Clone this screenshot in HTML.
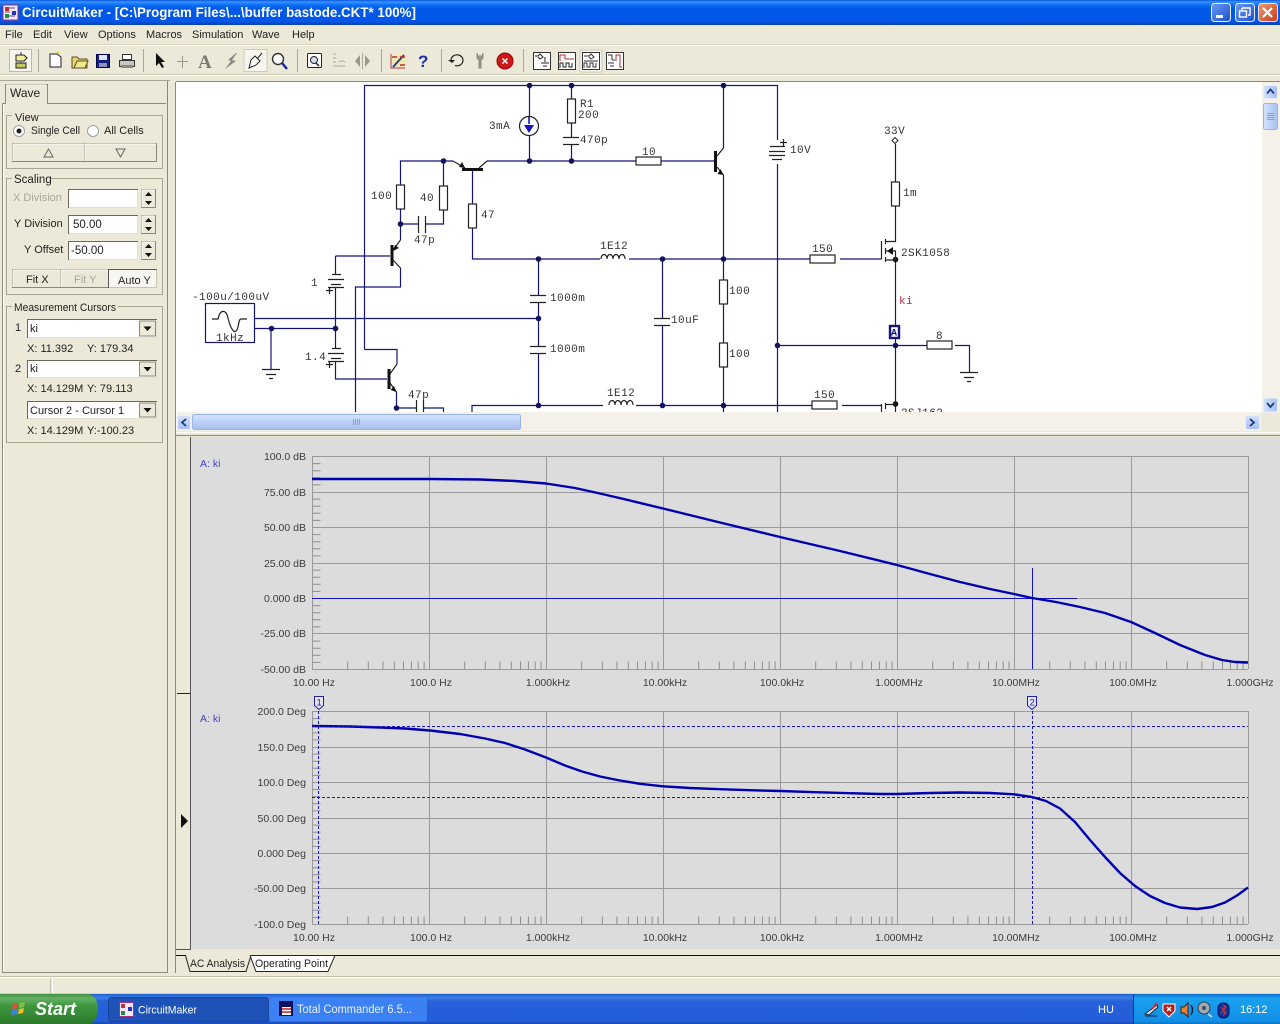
<!DOCTYPE html>
<html><head><meta charset="utf-8"><title>CircuitMaker</title>
<style>
html,body{margin:0;padding:0;background:#ece9d8;overflow:hidden}
svg{display:block;position:absolute;left:0;top:0}
text{font-family:"Liberation Sans",sans-serif;font-size:11px;fill:#222;white-space:pre}
.m text,text.m{font-family:"Liberation Mono",monospace;font-size:11px;letter-spacing:.45px;fill:#333}
.w{stroke:#14147a;stroke-width:1.2;fill:none}
.c{stroke:#222;stroke-width:1.2;fill:#fff}
.l{stroke:#222;stroke-width:1.2;fill:none}
.g{stroke:#9a9a9a;stroke-width:1;fill:none}
.t{stroke:#8e8e8e;stroke-width:1;fill:none}
.gl text,text.gl{font-size:10.5px;fill:#3c3c3c}
.cv{stroke:#0000b0;stroke-width:2.4;fill:none;stroke-linejoin:round}
.cu{stroke:#1515c0;stroke-width:1;fill:none}
.bx{fill:none;stroke:#a9a792}
.btn{fill:#ece9d8;stroke:#8a8876}
.ed{fill:#fff;stroke:#e4e1cf}
</style></head><body>
<svg width="1280" height="1024" viewBox="0 0 1280 1024" xmlns="http://www.w3.org/2000/svg">
<defs>
<linearGradient id="tb" x1="0" y1="0" x2="0" y2="1">
<stop offset="0" stop-color="#0a57dc"/><stop offset=".08" stop-color="#3a93ff"/><stop offset=".18" stop-color="#0f72f5"/><stop offset=".35" stop-color="#0058e6"/><stop offset=".85" stop-color="#0257e8"/><stop offset="1" stop-color="#0840b0"/>
</linearGradient>
<linearGradient id="tk" x1="0" y1="0" x2="0" y2="1">
<stop offset="0" stop-color="#1f5fd0"/><stop offset=".12" stop-color="#3a80e8"/><stop offset=".25" stop-color="#2560d8"/><stop offset=".9" stop-color="#245edb"/><stop offset="1" stop-color="#1a48a8"/>
</linearGradient>
<linearGradient id="st" x1="0" y1="0" x2="0" y2="1">
<stop offset="0" stop-color="#3c8f3c"/><stop offset=".15" stop-color="#64b064"/><stop offset=".4" stop-color="#3f963f"/><stop offset="1" stop-color="#2c7a2c"/>
</linearGradient>
<linearGradient id="tr" x1="0" y1="0" x2="0" y2="1">
<stop offset="0" stop-color="#0c6fd0"/><stop offset=".15" stop-color="#19a0ee"/><stop offset=".9" stop-color="#1290e6"/><stop offset="1" stop-color="#0f70c8"/>
</linearGradient>
<linearGradient id="sb" x1="0" y1="0" x2="0" y2="1">
<stop offset="0" stop-color="#d4e2fb"/><stop offset=".5" stop-color="#bcd0f7"/><stop offset="1" stop-color="#a8c0ee"/>
</linearGradient>
<linearGradient id="sv" x1="0" y1="0" x2="1" y2="0">
<stop offset="0" stop-color="#d4e2fb"/><stop offset=".5" stop-color="#bcd0f7"/><stop offset="1" stop-color="#a8c0ee"/>
</linearGradient>
<linearGradient id="wb" x1="0" y1="0" x2="1" y2="1">
<stop offset="0" stop-color="#6d9af0"/><stop offset="1" stop-color="#1d4fd0"/>
</linearGradient>
<linearGradient id="wr" x1="0" y1="0" x2="1" y2="1">
<stop offset="0" stop-color="#ee9b7a"/><stop offset="1" stop-color="#c63a14"/>
</linearGradient>
<clipPath id="sch"><rect x="177" y="83" width="1084" height="329"/></clipPath>
<path id="xt" d="M35.2 0v-8M55.8 0v-8M70.4 0v-8M81.8 0v-8M91 0v-8M98.9 0v-8M105.7 0v-8M111.6 0v-8" class="t"/>
<g id="xts"><use href="#xt" x="0"/><use href="#xt" x="117"/><use href="#xt" x="234"/><use href="#xt" x="351"/><use href="#xt" x="468"/><use href="#xt" x="585"/><use href="#xt" x="702"/><use href="#xt" x="819"/></g>
<path id="yt" d="M0 7.1h8M0 14.2h8M0 21.3h8M0 28.4h8" class="t"/>
<g id="yts"><use href="#yt" y="0"/><use href="#yt" y="35.5"/><use href="#yt" y="71"/><use href="#yt" y="106.5"/><use href="#yt" y="142"/><use href="#yt" y="177.5"/></g>
<g id="gnd"><path class="l" d="M-9 0h18M-5 5h10M-2 9h4"/></g>
<g id="hr"><rect class="c" x="-12.5" y="-4" width="25" height="8"/></g>
<g id="vr"><rect class="c" x="-4" y="-12" width="8" height="24"/></g>
</defs>

<!-- base -->
<rect width="1280" height="1024" fill="#ece9d8"/>
<!-- title bar -->
<rect width="1280" height="25" fill="url(#tb)"/>
<rect x="3" y="5" width="15" height="15" fill="#f4e8f4" stroke="#a03080"/>
<path d="M5 8h10M5 12h5M5 16h10" stroke="#604080" fill="none"/><rect x="12" y="11" width="4" height="4" fill="#2030c0"/><rect x="5" y="7" width="4" height="4" fill="#c03030"/><rect x="5" y="14" width="4" height="4" fill="#209040"/>
<text x="22" y="17" textLength="394" lengthAdjust="spacingAndGlyphs" style="font-size:14px;font-weight:bold;fill:#fff">CircuitMaker - [C:\Program Files\...\buffer bastode.CKT* 100%]</text>
<rect x="1211.5" y="3.5" width="19" height="18" rx="3" fill="url(#wb)" stroke="#e8f0ff"/><rect x="1216" y="15" width="7" height="3" fill="#fff"/>
<rect x="1235.5" y="3.5" width="19" height="18" rx="3" fill="url(#wb)" stroke="#e8f0ff"/><path d="M1242 8h8v7h-2M1242 8v2" stroke="#fff" fill="none" stroke-width="1.4"/><rect x="1239.5" y="11" width="7" height="6" fill="none" stroke="#fff" stroke-width="1.4"/>
<rect x="1258.5" y="3.5" width="19" height="18" rx="3" fill="url(#wr)" stroke="#f0e8e0"/><path d="M1263 8l9 9M1272 8l-9 9" stroke="#fff" stroke-width="2.2"/>

<!-- menu -->
<g style="fill:#222">
<text x="5" y="38">File</text><text x="33" y="38">Edit</text><text x="64" y="38">View</text><text x="98" y="38">Options</text><text x="146" y="38">Macros</text><text x="192" y="38">Simulation</text><text x="252" y="38">Wave</text><text x="292" y="38">Help</text>
</g>
<path d="M0 45.5H1280" stroke="#fff"/><path d="M0 44.5H1280" stroke="#d8d4c0"/>
<path d="M0 74.500H1280" stroke="#c8c5b0"/><path d="M0 75.500H1280" stroke="#fff"/>

<!-- toolbar -->
<path d="M38.500 49v23M143.500 49v23M297.500 49v23M381.500 49v23M441.500 49v23M523.500 49v23" stroke="#aaa795"/>
<rect x="9.500" y="49.500" width="22" height="22" fill="#f6f5ee" stroke="#bcb9a6"/>
<path d="M21 52v3M21 62v4" stroke="#222"/><path d="M16 55h8l3 3-3 3h-8z" fill="#f4f09a" stroke="#222"/><rect x="16" y="63" width="10" height="5" fill="#c4c860" stroke="#222"/>
<path d="M50 54h7l4 3v10H50z" fill="#fff" stroke="#222"/><path d="M57 52l2 1" stroke="#e8d020" stroke-width="2"/>
<path d="M72 57h5l2 2h8v9H72z" fill="#e8d470" stroke="#5a5020"/><path d="M74 68l3-7h11l-3 7z" fill="#f4e68c" stroke="#5a5020"/>
<rect x="96.500" y="54.500" width="13" height="13" fill="#10207c" stroke="#000050"/><rect x="99" y="55" width="8" height="5" fill="#e0e0ff"/><rect x="99" y="63" width="8" height="4" fill="#9090c0"/>
<path d="M122.500 54.500h9v5h-9z" fill="#fff" stroke="#333"/><rect x="119.500" y="60.500" width="15" height="6" fill="#c8c8c0" stroke="#333"/><rect x="121" y="65" width="12" height="3" fill="#888"/>
<path d="M156 53l0 13 3-3 3 5 2-1-3-5 4 0z" fill="#111"/>
<path d="M182.500 56v12M177 61.500h11" stroke="#9c9a8c"/>
<text x="198" y="68" style="font-family:'Liberation Serif',serif;font-size:19px;font-weight:bold;fill:#7a7a70">A</text>
<path d="M236 53l-8 7 3 1-6 8 11-8-4-1 5-7z" fill="#8a8a80"/>
<rect x="244" y="49.500" width="23" height="22" fill="#f6f5ee" stroke="#cfccb9"/>
<path d="M262 53l-5 6M251 60l4-4 5 5-4 4-7 3z" stroke="#222" fill="#fff"/>
<circle cx="278" cy="59" r="5.500" fill="#fff" stroke="#333" stroke-width="1.400"/><path d="M282 63l5 6" stroke="#1a2aa0" stroke-width="2.500"/>
<rect x="307.500" y="53.500" width="14" height="14" rx="1" fill="#fff" stroke="#222"/><circle cx="314" cy="60" r="3.500" fill="#cde" stroke="#222"/><path d="M316 63l3 3" stroke="#222" stroke-width="1.500"/>
<path d="M333 54h3M333 58h3M333 62h3M333 66h12M339 62a5 5 0 0 1 6 0" stroke="#aaa898" fill="none"/>
<path d="M360 55v12l-5-6zM365 55v12l5-6z" fill="#9a9888"/><path d="M362.500 53v16" stroke="#aaa898"/>
<circle cx="399" cy="61" r="7" fill="#f4e880" opacity=".45"/><path d="M391 54v14h14" stroke="#b04040" fill="none"/><path d="M393 67l11-12" stroke="#304080" stroke-width="2"/><path d="M392 57h5M400 65h5M400 57l5 0" stroke="#b03030" stroke-width="1.500"/>
<text x="418" y="67" style="font-size:17px;font-weight:bold;fill:#1830b0">?</text>
<path d="M451 60a6 5.500 0 1 1 4 5.500" stroke="#222" stroke-width="1.200" fill="none"/><path d="M448 60h7l-3 3z" fill="#222"/>
<path d="M477 53v5l2 2v8h2v-8l2-2v-5l-1 3h-4z" fill="#9c9a8c" stroke="#8a887a"/>
<circle cx="505" cy="61" r="8" fill="#cc1818" stroke="#900"/><path d="M502.500 58.500l5 5M507.500 58.500l-5 5" stroke="#fff" stroke-width="1.500"/>
<g fill="#fff" stroke="#333">
<rect x="533.500" y="52.500" width="17" height="17"/>
<rect x="558.500" y="52.500" width="17" height="17"/>
<rect x="580" y="50" width="22" height="22" fill="#f6f5ee" stroke="#cfccb9"/>
<rect x="582.500" y="52.500" width="17" height="17"/>
<rect x="606.500" y="52.500" width="17" height="17"/>
</g>
<path d="M535 56h3l2-2 3 3-3 2-2-2M545 57v5M541 63h8M543 66h4" stroke="#222" fill="none"/>
<path d="M560 61v-6h5v4h9" stroke="#b03030" fill="none"/><path d="M560 68v-5h3v4h3v-4h3v4h3v-4" stroke="#222" fill="none"/>
<path d="M584 56h5l2-2 3 3-3 2-2-2M584 68v-5h3v4h3v-4h3v4h3v-4M584 61h14" stroke="#333" fill="none"/>
<path d="M608 55h4v5M608 63h6M610 66h4M612 60h3" stroke="#333" fill="none"/><path d="M616 61v-6h4v12h2" stroke="#b03030" fill="none"/>

<!-- left panel -->
<path d="M0 80.500H170" stroke="#a8a694"/>
<path d="M2.500 103.500V972.500H167.500V81" fill="none" stroke="#8a8876"/><path d="M3.500 104V971.500" stroke="#fff"/>
<path d="M2.500 103.500H5.500V84.500H47.500V103.500H166" fill="none" stroke="#8a8876"/>
<path d="M6 85H46" stroke="#fff"/><rect x="6" y="86" width="41" height="18" fill="#ece9d8"/>
<text x="10" y="97" style="font-size:12px">Wave</text>
<rect class="bx" x="6.500" y="115.500" width="156" height="53"/>
<rect x="12" y="111" width="27" height="11" fill="#ece9d8"/><text x="15" y="121">View</text>
<circle cx="19" cy="131" r="5.500" fill="#fff" stroke="#98a0a8"/><circle cx="19" cy="131" r="2.500" fill="#222"/>
<text x="31" y="134" textLength="49" lengthAdjust="spacingAndGlyphs">Single Cell</text>
<circle cx="93" cy="131" r="5.500" fill="#fff" stroke="#98a0a8"/>
<text x="104" y="134">All Cells</text>
<rect class="btn" x="12.500" y="143.500" width="72" height="18"/><rect class="btn" x="84.500" y="143.500" width="72" height="18"/>
<path d="M13 161V144H84M85 161V144H156" stroke="#fff" fill="none"/>
<path d="M44 157l4.500-8 4.500 8z M116 149l4.500 8 4.500-8z" fill="none" stroke="#666"/>

<rect class="bx" x="6.500" y="178.500" width="156" height="116"/>
<rect x="12" y="174" width="38" height="11" fill="#ece9d8"/><text x="14" y="183" style="font-size:11.500px">Scaling</text>
<text x="13" y="201" style="fill:#a8a696">X Division</text><text x="14" y="227">Y Division</text><text x="24" y="253">Y Offset</text>
<rect class="ed" x="68.500" y="189.500" width="69" height="18"/><rect class="ed" x="68.500" y="215.500" width="69" height="18"/><rect class="ed" x="68.500" y="241.500" width="69" height="18"/>
<path d="M68.500 208V189.500H138M68.500 234V215.500H138M68.500 260V241.500H138" fill="none" stroke="#6a685a"/>
<text x="73" y="228" style="font-size:11.500px">50.00</text><text x="71" y="254" style="font-size:11.500px">-50.00</text>
<rect class="btn" x="141.500" y="189.500" width="14" height="18"/><rect class="btn" x="141.500" y="215.500" width="14" height="18"/><rect class="btn" x="141.500" y="241.500" width="14" height="18"/>
<path d="M142 207V190H155M142 233V216H155M142 259V242H155" stroke="#fff" fill="none"/>
<path d="M145 196l3.500-4 3.500 4zM145 201l3.500 4 3.500-4zM145 222l3.500-4 3.500 4zM145 227l3.500 4 3.500-4zM145 248l3.500-4 3.500 4zM145 253l3.500 4 3.500-4z" fill="#111"/>
<rect class="btn" x="12.500" y="269.500" width="48" height="18"/><rect class="btn" x="60.500" y="269.500" width="48" height="18"/><rect x="108.500" y="269.500" width="48" height="18" fill="#f7f6f0" stroke="#c8c5b2"/>
<path d="M13 287V270H60M61 287V270H108" stroke="#fff" fill="none"/>
<path d="M108.500 288V269.500H157" fill="none" stroke="#555"/>
<text x="26" y="283">Fit X</text><text x="74" y="283" style="fill:#a8a696">Fit Y</text><text x="118" y="284">Auto Y</text>

<rect class="bx" x="6.500" y="306.500" width="156" height="136"/>
<rect x="12" y="302" width="106" height="11" fill="#ece9d8"/><text x="14" y="311" textLength="102" lengthAdjust="spacingAndGlyphs">Measurement Cursors</text>
<text x="15" y="331">1</text><text x="15" y="372">2</text>
<g>
<rect class="ed" x="27.500" y="319.500" width="129" height="18"/><rect class="ed" x="27.500" y="360.500" width="129" height="17"/><rect class="ed" x="27.500" y="401.500" width="129" height="17"/>
<path d="M27.500 338V319.500H157M27.500 378V360.500H157M27.500 419V401.500H157" fill="none" stroke="#6a685a"/>
<rect class="btn" x="139.500" y="321" width="16" height="15"/><rect class="btn" x="139.500" y="362" width="16" height="14"/><rect class="btn" x="139.500" y="403" width="16" height="14"/>
<path d="M143.500 326.500h8l-4 4.500zM143.500 367h8l-4 4.500zM143.500 408h8l-4 4.500z" fill="#111"/>
</g>
<text x="30" y="332">ki</text><text x="30" y="372">ki</text><text x="30" y="414">Cursor 2 - Cursor 1</text>
<g style="fill:#333">
<text x="27" y="352">X: 11.392</text><text x="87" y="352">Y: 179.34</text>
<text x="27" y="392">X: 14.129M</text><text x="87" y="392">Y: 79.113</text>
<text x="27" y="434">X: 14.129M</text><text x="87" y="434">Y:-100.23</text>
</g>

<!-- schematic -->
<rect x="176" y="82" width="1102" height="348" fill="#fff"/>
<path d="M176 81.500H1280" stroke="#8a8876"/><path d="M175.500 82V973" stroke="#8a8876"/>
<g clip-path="url(#sch)">
<g class="w">
<path d="M364.500 349.500V85.500H777.500V140"/>
<path d="M364.500 349.500H397V364"/>
<path d="M400.500 185V161H453M443.500 161V186M400.500 209V240M400.500 224H418M425 224H443.500V210"/>
<path d="M487 161H636M661 161H715M529.500 85V116M529.500 136V161M571.500 85V99M571.500 123V137M571.500 144V161"/>
<path d="M723.500 85V148M723.500 175V280M723.500 304V343M723.500 367V412"/>
<path d="M472.500 170V204M472.500 228V259H600M629 259H810M840 259H881"/>
<path d="M400.500 268V287H355.500V412"/>
<path d="M335.500 256H390M335.500 256V274M335.500 287V348M335.500 361V379H387"/>
<path d="M255 318.500H538M255 328.500H335M271 328V369"/>
<path d="M538.500 259V295M538.500 302V346M538.500 353V405"/>
<path d="M662.500 259V318M662.500 325V405"/>
<path d="M472 412V405.500H603M636 405.500H812M842 405.500H881"/>
<path d="M777.500 164V412M777 345.500H927M955 345.500H969.500V372"/>
<path d="M895.500 144V182M895.500 206V233M895.500 259V412"/>
<path d="M396.500 392V408M396 408H416M423 408H443.500V412"/>
</g>
<!-- nodes -->
<g fill="#14145e">
<circle cx="529.500" cy="85.500" r="2.800"/><circle cx="571.500" cy="85.500" r="2.800"/><circle cx="723.500" cy="85.500" r="2.800"/>
<circle cx="529.500" cy="161" r="2.800"/><circle cx="571.500" cy="161" r="2.800"/><circle cx="443.500" cy="161" r="2.800"/>
<circle cx="400.500" cy="224" r="2.800"/><circle cx="538.500" cy="259" r="2.800"/><circle cx="662.500" cy="259" r="2.800"/><circle cx="723.500" cy="259" r="2.800"/>
<circle cx="538.500" cy="318.500" r="2.800"/><circle cx="335.500" cy="328.500" r="2.800"/><circle cx="271.500" cy="328.500" r="2.800"/>
<circle cx="777.500" cy="345.500" r="2.800"/><circle cx="895.500" cy="345.500" r="2.800"/>
<circle cx="538.500" cy="405.500" r="2.800"/><circle cx="662.500" cy="405.500" r="2.800"/><circle cx="723.500" cy="405.500" r="2.800"/>
<circle cx="396.500" cy="408" r="2.800"/>
</g>
<g fill="#111"><circle cx="895.500" cy="259.500" r="2.800"/><circle cx="895.500" cy="404" r="2.800"/></g>
<!-- resistors -->
<use href="#vr" x="400.500" y="197"/><use href="#vr" x="443.500" y="198"/><use href="#vr" x="472.500" y="216"/>
<use href="#vr" x="571.500" y="111"/><use href="#vr" x="723.500" y="292"/><use href="#vr" x="723.500" y="355"/><use href="#vr" x="895.500" y="194"/>
<use href="#hr" x="648.500" y="161"/><use href="#hr" x="822.500" y="259"/><use href="#hr" x="824.500" y="405"/><use href="#hr" x="939.500" y="345"/>
<!-- caps -->
<path class="l" d="M418.500 216V233M425.500 216V233M563 137.500H579M563 144.500H579M530 295.500H546M530 302.500H546M530 346.500H546M530 353.500H546M654 318.500H670M654 325.500H670M416.500 400V412M423.500 400V412"/>
<!-- inductors -->
<path class="l" d="M601 259c0-6 6-6 6 0c0-6 6-6 6 0c0-6 6-6 6 0c0-6 6-6 6 0"/>
<path class="l" d="M609 405c0-6 6-6 6 0c0-6 6-6 6 0c0-6 6-6 6 0c0-6 6-6 6 0"/>
<!-- batteries -->
<path class="l" d="M332 274.500H341M328 279.500H344M331 284.500H341M328 287.500H344M332 348.500H341M328 353.500H344M331 358.500H341M328 361.500H344M770 146.500H785M769 151.500H785M769 155.500H785M772 159.500H782M326 290.500h7M329.500 287v7M326 364.500h7M329.500 361v7M780 142.500h7M783.500 139v7"/>
<!-- transistors -->
<path d="M392 245V266" stroke="#111" stroke-width="3" fill="none"/>
<path class="l" d="M400.500 240L393 250M393 260L400.500 268"/><path d="M393 251l2-6 4 3z" fill="#111"/>
<path d="M389 369V389" stroke="#111" stroke-width="3" fill="none"/>
<path class="l" d="M397 364L390 374M390 383L396.500 392"/><path d="M396.500 392l-6-2 3.500-4z" fill="#111"/>
<path d="M462 169.500H483" stroke="#111" stroke-width="3" fill="none"/>
<path class="l" d="M453 161L465 168M479 168L487 161"/><path d="M465 168l-6-1 3-5z" fill="#111"/>
<path d="M715.500 151V172" stroke="#111" stroke-width="3" fill="none"/>
<path class="l" d="M717 156L723.500 148M717 167L723.500 175"/><path d="M723.500 175l-6-1 3-5z" fill="#111"/>
<!-- mosfets -->
<path class="l" d="M881.500 241V259.500M885.500 239V244M885.500 248V254M885.500 257V262M885.500 241.500H895.500V233M885.500 251H895.500V259.500M885.500 260H895.500"/>
<path d="M887 251l6-4v8z" fill="#111"/>
<path class="l" d="M881.500 404V412M885.500 403V409M885.500 404.500H895.500"/>
<!-- current source -->
<circle cx="529" cy="126" r="9.500" fill="#fff" stroke="#222" stroke-width="1.200"/>
<path d="M529 117v7" stroke="#1414c8" stroke-width="1.600"/><path d="M524 125h10l-5 8z" fill="#1414c8"/>
<!-- source -->
<rect x="205.500" y="303.500" width="49" height="39" fill="#fff" stroke="#14147a" stroke-width="1.200"/>
<path class="l" d="M212 319h6c2-10 8-10 10 -1s7 20 10 9c1-4 1-8 3-8h6"/>
<!-- ground -->
<use href="#gnd" x="271" y="369.500"/><use href="#gnd" x="969" y="372.500"/>
<!-- diamond -->
<path d="M895 137.500l3 3-3 3-3-3z" fill="#fff" stroke="#222"/>
<!-- probe -->
<rect x="890" y="326" width="9" height="12" fill="#fff" stroke="#14147a" stroke-width="2.400"/>
<text x="891" y="335.500" style="font-family:'Liberation Mono',monospace;font-size:10px;fill:#14147a;font-weight:bold">A</text>
<g class="m">
<text x="192" y="300">-100u/100uV</text><text x="216" y="341">1kHz</text>
<text x="311" y="286">1</text><text x="305" y="360">1.4</text>
<text x="371" y="199">100</text><text x="420" y="201">40</text><text x="414" y="243">47p</text>
<text x="481" y="218">47</text><text x="408" y="398">47p</text><text x="489" y="129">3mA</text>
<text x="580" y="107">R1</text><text x="578" y="118">200</text><text x="580" y="143">470p</text>
<text x="642" y="155">10</text><text x="790" y="153">10V</text><text x="884" y="134">33V</text>
<text x="903" y="196">1m</text><text x="901" y="256">2SK1058</text>
<text x="600" y="249">1E12</text><text x="607" y="396">1E12</text>
<text x="550" y="301">1000m</text><text x="550" y="352">1000m</text><text x="671" y="323">10uF</text>
<text x="729" y="294">100</text><text x="729" y="357">100</text>
<text x="812" y="252">150</text><text x="814" y="398">150</text><text x="936" y="339">8</text>
<text x="901" y="416">2SJ162</text>
<text x="899" y="304" style="fill:#a83048">ki</text>
</g>
</g>
<!-- scrollbars -->
<rect x="177" y="412" width="1103" height="19" fill="#f3f1e8"/>
<rect x="1262" y="82" width="18" height="349" fill="#f3f1e8"/>
<rect x="1261" y="413" width="19" height="18" fill="#ece9d8"/>
<rect x="177.500" y="415.500" width="13" height="14" rx="2" fill="url(#sb)" stroke="#e8eefb"/><path d="M186 419l-4 3.500 4 3.500" stroke="#1a3a80" stroke-width="1.800" fill="none"/>
<rect x="192.500" y="414.500" width="328" height="15" rx="2" fill="url(#sb)" stroke="#9ab4e4"/>
<path d="M353.500 419v6M355.500 419v6M357.500 419v6M359.500 419v6" stroke="#8aa4d8"/>
<rect x="1245.500" y="415.500" width="14" height="14" rx="2" fill="url(#sb)" stroke="#e8eefb"/><path d="M1250 419l4 3.500-4 3.500" stroke="#1a3a80" stroke-width="1.800" fill="none"/>
<rect x="1263.500" y="85.500" width="14" height="13" rx="2" fill="url(#sv)" stroke="#e8eefb"/><path d="M1267 93.500l3.500-4 3.500 4" stroke="#1a3a80" stroke-width="1.800" fill="none"/>
<rect x="1263.500" y="103.500" width="14" height="26" rx="2" fill="url(#sv)" stroke="#9ab4e4"/><path d="M1267 113.500h7M1267 115.500h7M1267 117.500h7M1267 119.500h7" stroke="#8aa4d8"/>
<rect x="1263.500" y="398" width="14" height="14" rx="2" fill="url(#sv)" stroke="#e8eefb"/><path d="M1267 403l3.500 4 3.500-4" stroke="#1a3a80" stroke-width="1.800" fill="none"/>
<path d="M176 432.500H1280" stroke="#fff"/><path d="M176 435.500H1280" stroke="#888"/>

<!-- graph area -->
<rect x="191" y="437" width="1089" height="512" fill="#dcdcdc"/>
<rect x="178" y="437" width="13" height="512" fill="#ece9d8"/>
<path d="M190.500 437V949M176 949.500H191" stroke="#555"/>
<path d="M177 693.500H190" stroke="#222"/>
<path d="M181 814l7 7-7 7z" fill="#111"/>
<g class="g">
<path d="M312 456.500H1248M312 492.500H1248M312 527.500H1248M312 563.500H1248M312 598.500H1248M312 633.500H1248M312 669.500H1248"/>
<path d="M312.500 456V669M429.500 456V669M546.500 456V669M663.500 456V669M780.500 456V669M897.500 456V669M1014.500 456V669M1131.500 456V669M1248.500 456V669"/>
<path d="M312 711.500H1248M312 747.500H1248M312 782.500H1248M312 818.500H1248M312 853.500H1248M312 888.500H1248M312 924.500H1248"/>
<path d="M312.500 711V924M429.500 711V924M546.500 711V924M663.500 711V924M780.500 711V924M897.500 711V924M1014.500 711V924M1131.500 711V924M1248.500 711V924"/>
</g>
<use href="#xts" x="312.500" y="669.500"/><use href="#xts" x="312.500" y="924.500"/>
<use href="#yts" x="312.500" y="456.500"/><use href="#yts" x="312.500" y="711.500"/>
<g class="gl" text-anchor="end">
<text x="306" y="460">100.0 dB</text><text x="306" y="496">75.00 dB</text><text x="306" y="531">50.00 dB</text><text x="306" y="567">25.00 dB</text><text x="306" y="602">0.000 dB</text><text x="306" y="637">-25.00 dB</text><text x="306" y="673">-50.00 dB</text>
<text x="306" y="715">200.0 Deg</text><text x="306" y="751">150.0 Deg</text><text x="306" y="786">100.0 Deg</text><text x="306" y="822">50.00 Deg</text><text x="306" y="857">0.000 Deg</text><text x="306" y="892">-50.00 Deg</text><text x="306" y="928">-100.0 Deg</text>
</g>
<g class="gl" text-anchor="middle">
<text x="314" y="686">10.00 Hz</text><text x="431" y="686">100.0 Hz</text><text x="548" y="686">1.000kHz</text><text x="665" y="686">10.00kHz</text><text x="782" y="686">100.0kHz</text><text x="899" y="686">1.000MHz</text><text x="1016" y="686">10.00MHz</text><text x="1133" y="686">100.0MHz</text><text x="1250" y="686">1.000GHz</text>
<text x="314" y="941">10.00 Hz</text><text x="431" y="941">100.0 Hz</text><text x="548" y="941">1.000kHz</text><text x="665" y="941">10.00kHz</text><text x="782" y="941">100.0kHz</text><text x="899" y="941">1.000MHz</text><text x="1016" y="941">10.00MHz</text><text x="1133" y="941">100.0MHz</text><text x="1250" y="941">1.000GHz</text>
</g>
<text x="200" y="467" style="font-size:10.500px;fill:#4444c4">A: ki</text>
<text x="200" y="722" style="font-size:10.500px;fill:#4444c4">A: ki</text>
<!-- curves -->
<path class="cu" d="M312 598.500H1077M1032.500 568V669"/>
<polyline class="cv" points="312,479 430,479 480,479.500 515,481 546,483.500 575,488 600,493.500 630,500.500 663,508.500 720,522.500 780,537 840,551 897,565 930,574 960,582 990,589 1014,594 1032,598 1056,602 1080,607 1105,613 1131,622 1155,633 1180,645 1205,655 1222,660 1235,662 1248,662.500"/>
<polyline class="cv" points="312,726 350,726.500 380,727.500 405,728.500 430,730.500 460,734 485,738.500 505,743 525,749.500 546,757.500 565,765.500 582,771.500 600,776.500 620,780.500 640,783.800 663,786.300 690,788 720,789.200 750,790.200 780,791 815,792.200 850,793.200 880,794 897,794 930,793 960,792.500 990,793 1014,794.300 1032,797 1046,801 1060,808.500 1075,822 1090,840 1105,857 1120,873 1135,886 1150,896 1165,903 1180,907.500 1197,909 1212,907 1225,902.500 1237,895.500 1248,887.500"/>
<path class="cu" stroke-dasharray="3 2" d="M312 726.500H1248"/>
<path class="cu" stroke-dasharray="3 2" d="M312 797.500H1248"/>
<path class="cu" stroke-dasharray="3 2" d="M318.500 711V924"/>
<path class="cu" stroke-dasharray="3 2" d="M1032.500 711V924"/>
<path d="M314.500 696.500h9v9l-4.500 4-4.500-4z" fill="#e4e4f4" stroke="#2222a8"/><text x="316.500" y="705.500" style="font-size:9.500px;fill:#2222a8">1</text>
<path d="M1027.500 696.500h9v9l-4.500 4-4.500-4z" fill="#e4e4f4" stroke="#2222a8"/><text x="1029.500" y="705.500" style="font-size:9.500px;fill:#2222a8">2</text>

<!-- graph tabs -->
<path d="M176 955.500H186M250 955.500H1280" stroke="#111"/>
<path d="M250 955.500L256 971.500H328L335 955.500z" fill="#fff" stroke="#222"/>
<path d="M185.500 955.500L190 971.500H246L251 955.500" fill="#ece9d8" stroke="#222"/>
<text x="190" y="967" textLength="55" lengthAdjust="spacingAndGlyphs" style="font-size:11px">AC Analysis</text>
<text x="255" y="967" textLength="73" lengthAdjust="spacingAndGlyphs" style="font-size:11px">Operating Point</text>

<!-- status bar -->
<path d="M0 976.500H1280" stroke="#c4c1ac"/><path d="M0 977.500H1280" stroke="#fff"/>
<path d="M50.500 978V993" stroke="#c4c1ac"/><path d="M52.500 978V993" stroke="#fff"/>
<path d="M0 993.500H1280" stroke="#d4d1bc"/>

<!-- taskbar -->
<rect y="994" width="1280" height="30" fill="url(#tk)"/>
<path d="M0 994H90q8 4 8 15t-8 15H0z" fill="url(#st)"/>
<g><path d="M13 1004l5-1 0 5-6 1z" fill="#e05030"/><path d="M19 1003l6-1-1 5-5 1z" fill="#80c040"/><path d="M12 1010l6-1 0 5-7 1z" fill="#4080e0"/><path d="M19 1009l5-1-1 5-5 1z" fill="#f0c020"/></g>
<text x="35" y="1015" style="font-size:18px;font-weight:bold;font-style:italic;fill:#fff">Start</text>
<rect x="108.500" y="997.500" width="160" height="24" rx="3" fill="#1e52b7" stroke="#18449a"/>
<rect x="119.500" y="1002.500" width="14" height="14" fill="#f4e8f4" stroke="#a03080"/><rect x="121" y="1004" width="4" height="4" fill="#c03030"/><rect x="128" y="1007" width="4" height="4" fill="#2030c0"/><rect x="121" y="1011" width="4" height="4" fill="#209040"/>
<text x="138" y="1013.500" style="fill:#fff;font-size:11px" textLength="59" lengthAdjust="spacingAndGlyphs">CircuitMaker</text>
<rect x="269" y="997.500" width="158" height="24" rx="3" fill="#3c81f3"/>
<rect x="279" y="1001" width="14" height="15" fill="#101060"/><rect x="282" y="1007" width="9" height="8" fill="#fff"/><path d="M282 1009h9M282 1012h9" stroke="#c02020" stroke-width="1.500"/>
<text x="297" y="1013" style="fill:#e8f0ff;font-size:11.500px" textLength="115" lengthAdjust="spacingAndGlyphs">Total Commander 6.5...</text>
<text x="1098" y="1013" style="fill:#fff;font-size:11px">HU</text>
<rect x="1133" y="994" width="147" height="30" fill="url(#tr)"/><path d="M1133.500 994V1024" stroke="#0a3a90"/>
<path d="M1145 1014l12-9 1 2-9 8zM1145 1016h12" stroke="#102040" fill="#e8e8f0"/><path d="M1152 1009l5-6" stroke="#d03030" stroke-width="2"/>
<path d="M1163 1004h12v7l-6 6-6-6z" fill="#b02020" stroke="#fff"/><path d="M1167 1007l4 4M1171 1007l-4 4" stroke="#fff" stroke-width="1.500"/>
<path d="M1181 1007h3l4-4v14l-4-4h-3z" fill="#e8803a" stroke="#402010"/><path d="M1191 1005q3 5 0 10" stroke="#102040" fill="none" stroke-width="1.500"/>
<circle cx="1204" cy="1008" r="6" fill="#a0a8b0" stroke="#304050"/><circle cx="1204" cy="1008" r="2" fill="#405060"/><path d="M1208 1014l4 3" stroke="#dde" stroke-width="1.500"/>
<rect x="1218" y="1003" width="11" height="15" rx="5" fill="#10309a" stroke="#081860"/><path d="M1221 1007l5 6-2 2v-10l2 2-5 6" stroke="#d03030" fill="none"/>
<text x="1240" y="1013" style="fill:#fff;font-size:11px">16:12</text>
</svg>
</body></html>
